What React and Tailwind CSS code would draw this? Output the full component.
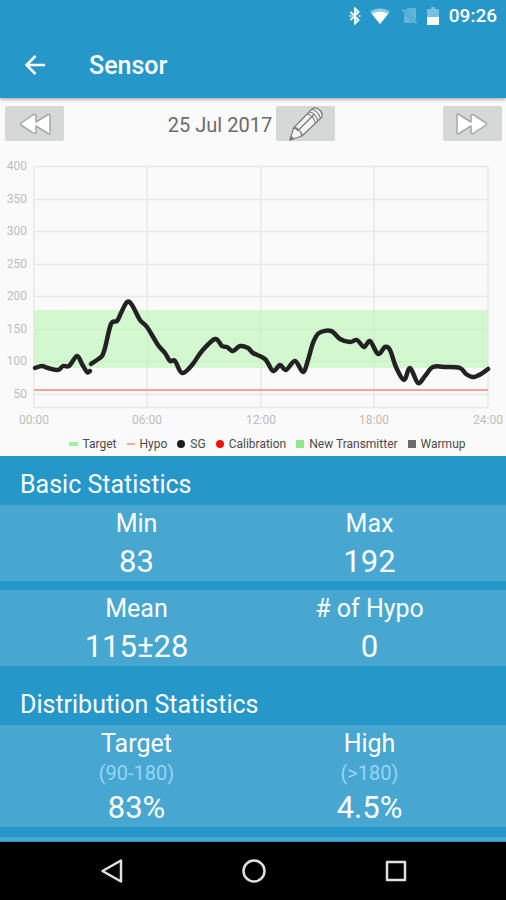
import { useState } from "react";

const X_TICKS = [
  { x: 34, label: "00:00" },
  { x: 147, label: "06:00" },
  { x: 261, label: "12:00" },
  { x: 374, label: "18:00" },
  { x: 488, label: "24:00" },
];

const Y_TICKS = [400, 350, 300, 250, 200, 150, 100, 50];

// sensor glucose traces, in chart units (x: 0-506, y: 0-278)
const TRACES = [
  [
    [35, 218], [42, 216], [48, 218], [58, 220], [63, 216], [69, 216],
    [77, 206], [82, 214], [87, 222], [90, 221],
  ],
  [
    [91, 214], [97, 210], [102, 206], [105, 198], [111, 174], [117, 171],
    [121, 163], [127, 152], [132, 155], [140, 170], [147, 177], [158, 195],
    [165, 203], [170, 211], [175, 211], [182, 223], [192, 215], [202, 201],
    [215, 189], [222, 196], [227, 197], [233, 201], [240, 196], [248, 198],
    [253, 203], [265, 209], [273, 221], [280, 215], [286, 220], [295, 211],
    [303, 222], [308, 210], [313, 193], [319, 183], [331, 181], [340, 189],
    [350, 192], [357, 190], [364, 197], [370, 191], [378, 204], [385, 197],
    [390, 200], [396, 217], [404, 230], [410, 218], [418, 233], [425, 226],
    [433, 217], [446, 217], [460, 218], [466, 224], [473, 227], [481, 224],
    [488, 219],
  ],
];

const LEGEND = [
  { label: "Target", mark: "h-1 w-[9px] bg-[#a5eda1]" },
  { label: "Hypo", mark: "h-0.5 w-2 bg-[#f9a3a3]" },
  { label: "SG", mark: "size-2 rounded-full bg-[#1c1c1c]" },
  { label: "Calibration", mark: "size-2 rounded-full bg-[#fb0d0d]" },
  { label: "New Transmitter", mark: "size-2 bg-[#90e98c]" },
  { label: "Warmup", mark: "size-2 bg-[#6b6b6b]" },
];

function yFor(value) {
  return Math.round(16 + (400 - value) * 0.65);
}

// Catmull-Rom spline through the points
function smooth(pts) {
  let d = `M${pts[0][0]} ${pts[0][1]}`;
  for (let i = 0; i < pts.length - 1; i++) {
    const p0 = pts[i - 1] || pts[i];
    const p1 = pts[i];
    const p2 = pts[i + 1];
    const p3 = pts[i + 2] || p2;
    const c1 = [p1[0] + (p2[0] - p0[0]) / 6, p1[1] + (p2[1] - p0[1]) / 6];
    const c2 = [p2[0] - (p3[0] - p1[0]) / 6, p2[1] - (p3[1] - p1[1]) / 6];
    d += `C${c1[0]} ${c1[1]} ${c2[0]} ${c2[1]} ${p2[0]} ${p2[1]}`;
  }
  return d;
}

function StatusBar() {
  return (
    <div className="flex h-8 items-center justify-end pr-[9px] text-white">
      <svg viewBox="0 0 12 18" className="mr-2 h-[18px] w-3" fill="none" stroke="currentColor" strokeWidth="1.9">
        <path d="M1.5 5l8 8L6 16.5v-15L9.500 5l-8 8" />
        <path d="M.5 9h1.800M9.800 9h1.800" strokeWidth="1.600" />
      </svg>
      <svg viewBox="0 0 22 16" className="mr-2.5 h-4 w-[22px]">
        <path d="M11 16L1 3.800C7 -.7 15 -.7 21 3.800z" fill="#8fcbe6" />
        <path d="M11 16L3 6C8 3 14 3 19 6z" fill="currentColor" />
      </svg>
      <svg viewBox="0 0 18 18" className="mr-2 h-[18px] w-[18px]">
        <path d="M7 1h7q1 0 1 1v14H4L3 15V5z" fill="#63b4d8" />
        <path d="M1 2l15 15" stroke="#2598c9" strokeWidth="3" />
        <path d="M1.500 2.500l14 14" stroke="#7cc0de" strokeWidth="1.400" />
      </svg>
      <svg viewBox="0 0 12 18" className="mr-2.5 h-[18px] w-3">
        <path d="M4 0h4v2h4v8H0V2h4z" fill="#79bfe0" />
        <path d="M0 10h12v8H0z" fill="currentColor" />
      </svg>
      <span className="text-[19px] leading-8 font-medium">09:26</span>
    </div>
  );
}

function AppBar() {
  return (
    <header className="relative z-10 bg-[#2598c9] shadow-[0_1px_4px_rgba(0,0,0,0.4)]">
      <StatusBar />
      <div className="flex h-[66px] items-center pt-0.5 text-white">
        <button aria-label="Back" className="ml-6 size-6">
          <svg viewBox="0 0 24 24" fill="none" stroke="currentColor" strokeWidth="2.500">
            <path d="M21 11H3M11.500 2L2.500 11l9 9" />
          </svg>
        </button>
        <h1 className="ml-[41px] text-[25px] font-medium">Sensor</h1>
      </div>
    </header>
  );
}

function GreyButton({ label, onClick, children }) {
  return (
    <button
      aria-label={label}
      onClick={onClick}
      className="flex h-[35px] w-[59px] items-center justify-center rounded-xs bg-[#d6d7d7]"
    >
      {children}
    </button>
  );
}

function Skip({ className = "" }) {
  return (
    <svg
      viewBox="0 0 32 22"
      className={`h-[22px] w-8 ${className}`}
      fill="#fff"
      stroke="#a6a6a6"
      strokeWidth="1.500"
      strokeLinejoin="round"
    >
      <path d="M1 1.500q1-.8 2 0L15 9V2.500q0-1 1-1t2 .6L30 10q1.200 1 0 2L18 20q-3 1.500-3-.5V13L3 20.500q-2 .5-2-1z" />
    </svg>
  );
}

function Pencil() {
  return (
    <svg
      viewBox="0 0 36 36"
      className="h-9 w-9"
      fill="#f3f3f3"
      stroke="#7a7a7a"
      strokeWidth="1.200"
      strokeLinejoin="round"
    >
      <path d="M2 34L5.500 22 24 3q3-2.500 7 .5T34 11L14 30z" />
      <path d="M5.500 22q4-1 4.500 2.500 4 .5 4 5.500M10 24.500L26 8.500" fill="none" />
      <path d="M2 34l1-3.500 2.500 2.500z" fill="#7a7a7a" />
      <path d="M19 8q6 1 8.500 9M21.500 6q6 1 8.500 9M24 3.500q6 1 8.500 9" fill="none" />
      <path d="M5.500 22l2.500.5 2 2M14 30l-1-3" fill="none" strokeWidth="1.600" />
    </svg>
  );
}

function DateBar() {
  const [day, setDay] = useState(25);
  return (
    <div className="flex items-center justify-between pt-2 pr-1 pl-[5px]">
      <GreyButton label="Previous day" onClick={() => setDay(Math.max(1, day - 1))}>
        <Skip className="rotate-180" />
      </GreyButton>
      <div className="mr-1 flex items-center gap-1">
        <span className="pt-0.5 text-[20px] text-[#6b6b6b]">{day} Jul 2017</span>
        <GreyButton label="Edit">
          <Pencil />
        </GreyButton>
      </div>
      <GreyButton label="Next day" onClick={() => setDay(Math.min(31, day + 1))}>
        <Skip />
      </GreyButton>
    </div>
  );
}

function Chart() {
  return (
    <svg viewBox="0 0 506 278" className="mt-[9px] block h-auto w-full">
      <g stroke="#e8e8e8" strokeWidth="1.500">
        {Y_TICKS.map((v) => (
          <path key={v} d={`M34 ${yFor(v) + 0.5}H488`} />
        ))}
        {X_TICKS.map((t) => (
          <path key={t.x} d={`M${t.x} 16V257`} />
        ))}
        <path d="M34 257.500H488" />
      </g>
      <path d="M34 160H488V218H34z" fill="#b9f6b4" fillOpacity="0.6" />
      <path d="M34 240H488" stroke="#f9a0a0" strokeWidth="2" />
      <g fill="none" stroke="#222" strokeWidth="4.500" strokeLinecap="round" strokeLinejoin="round">
        {TRACES.map((pts, i) => (
          <path key={i} d={smooth(pts)} />
        ))}
      </g>
      <g fill="#bdbdbd" fontSize="12">
        {Y_TICKS.map((v) => (
          <text key={v} x="27" y={yFor(v) + 4} textAnchor="end">
            {v}
          </text>
        ))}
        {X_TICKS.map((t) => (
          <text key={t.x} x={t.x} y="274" textAnchor="middle">
            {t.label}
          </text>
        ))}
      </g>
    </svg>
  );
}

function Legend() {
  return (
    <ul className="flex h-7 items-center justify-center gap-2.5 pt-1 pl-7 text-xs leading-6 text-[#4a4a4a]">
      {LEGEND.map((item) => (
        <li key={item.label} className="flex items-center gap-[5px] whitespace-nowrap">
          <span className={item.mark} />
          {item.label}
        </li>
      ))}
    </ul>
  );
}

function Stat({ name, range, value }) {
  return (
    <div className="flex flex-col items-center">
      <div className="text-[25px] leading-[38px]">{name}</div>
      {range && <div className="mb-1.5 text-[20px] leading-5 text-[#95d5f7]">{range}</div>}
      <div className="text-[31px] leading-[38px]">{value}</div>
    </div>
  );
}

function StatRow({ items }) {
  return (
    <div className="grid grid-cols-2 bg-[#47a7d1] px-5">
      {items.map((s) => (
        <Stat key={s.name} {...s} />
      ))}
    </div>
  );
}

function SectionTitle({ children }) {
  return <h2 className="px-5 text-[25px] leading-10">{children}</h2>;
}

function NavBar() {
  return (
    <nav className="grid h-[58px] grid-cols-[1fr_142px_142px_1fr] items-center bg-black pl-0.5 text-[#e0e0e0]">
      <button aria-label="Back" className="-mr-3 justify-self-end">
        <svg viewBox="0 0 24 24" className="size-6" fill="none" stroke="currentColor" strokeWidth="2.500" strokeLinejoin="round">
          <path d="M21 1.500v21L2.500 12z" />
        </svg>
      </button>
      <button aria-label="Home" className="-mr-3 justify-self-end">
        <svg viewBox="0 0 24 24" className="size-6" fill="none" stroke="currentColor" strokeWidth="2.500">
          <circle cx="12" cy="12" r="10.500" />
        </svg>
      </button>
      <button aria-label="Recent apps" className="-mr-3 justify-self-end">
        <svg viewBox="0 0 24 24" className="size-6" fill="none" stroke="currentColor" strokeWidth="2.500" strokeLinejoin="round">
          <path d="M3 3h18v18H3z" />
        </svg>
      </button>
    </nav>
  );
}

export default function App() {
  return (
    <div className="flex min-h-screen flex-col bg-[#fafafa] font-[Roboto,sans-serif]">
      <AppBar />
      <section>
        <DateBar />
        <Chart />
        <Legend />
      </section>
      <main className="flex-1 bg-[#2598c9] text-white">
        <div className="pt-[9px]">
          <SectionTitle>Basic Statistics</SectionTitle>
          <div className="space-y-[9px]">
            <StatRow
              items={[
                { name: "Min", value: "83" },
                { name: "Max", value: "192" },
              ]}
            />
            <StatRow
              items={[
                { name: "Mean", value: "115±28" },
                { name: "# of Hypo", value: "0" },
              ]}
            />
          </div>
        </div>
        <div className="pt-[19px]">
          <SectionTitle>Distribution Statistics</SectionTitle>
          <StatRow
            items={[
              { name: "Target", range: "(90-180)", value: "83%" },
              { name: "High", range: "(>180)", value: "4.5%" },
            ]}
          />
        </div>
        <div className="mt-[10px] h-1 bg-[#47a7d1]" />
      </main>
      <NavBar />
    </div>
  );
}
